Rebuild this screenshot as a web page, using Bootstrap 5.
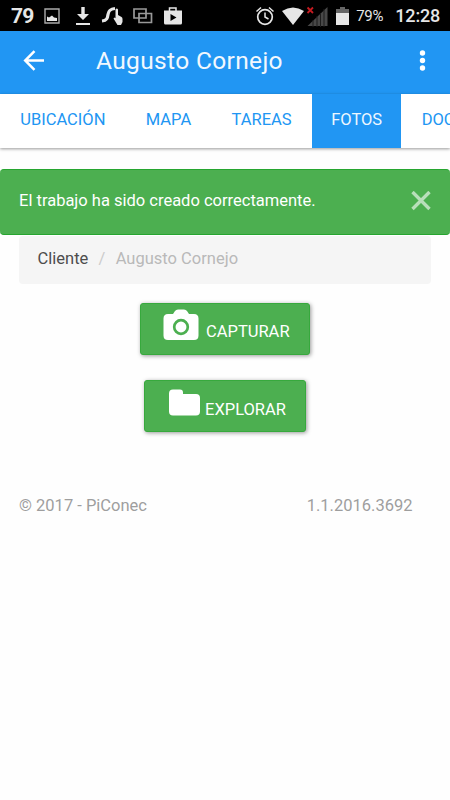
<!DOCTYPE html>
<html lang="es">
<head>
<meta charset="utf-8">
<meta name="viewport" content="width=device-width, initial-scale=1">
<title>Augusto Cornejo - Fotos</title>
<link href="https://cdn.jsdelivr.net/npm/bootstrap@5.3.0/dist/css/bootstrap.min.css" rel="stylesheet">
<style>
body{font-family:Roboto,"Liberation Sans",sans-serif;font-size:16.5px;line-height:24px;background:#fefefe;min-height:800px}
svg{display:block;flex:none}
.status{height:31px;background:#000;color:#e6e6e6;padding:1px 10px 0 11px}
.status .count{font-size:21px;font-weight:700;width:33px;letter-spacing:-.8px}
.status .pct{font-size:15px;margin-left:7px;width:39px;letter-spacing:-.4px}
.status .clock{font-size:18px;font-weight:500;letter-spacing:-.2px;white-space:nowrap}
.appbar{height:63px;background:#2196f3;color:#fff;padding:0 20px 4px 22px}
.appbar h1{font-size:24.5px;font-weight:400;letter-spacing:.35px;line-height:32px;margin:0 0 0 50px;color:#f2f8fe}
.tabs{height:54px;background:#fff;box-shadow:0 1px 3px rgba(0,0,0,.4);overflow:hidden}
.tabs .nav-link{height:54px;line-height:51px;padding:0 20.2px;color:#2196f3;border-radius:0;white-space:nowrap}
.tabs .nav-link.active{background:#2196f3;color:#eef7ff;padding:0 19.3px}
.notice{height:66px;margin:21px 0 0;padding:0 19px 2px;background:#4caf50;border:1px solid #26a52f;border-left:0;border-right:0;border-radius:4px;color:#fff}
.crumbs{margin:1px 19px 18.500px;height:48px;padding:0 18.5px 3px;background:#f5f5f5;border-radius:4px;--bs-breadcrumb-divider-color:#ccc;--bs-breadcrumb-item-padding-x:10.3px}
.crumbs .breadcrumb-item{color:#4d4d4d}
.crumbs .breadcrumb-item.active{color:#b9b9b9}
.action{--bs-btn-bg:#4caf50;--bs-btn-color:#fff;--bs-btn-border-color:#37a93d;--bs-btn-hover-bg:#43a047;--bs-btn-hover-color:#fff;--bs-btn-border-radius:3px;--bs-btn-font-size:16.5px;height:52.500px;padding:0;box-shadow:1px 1px 4px rgba(0,0,0,.4)}
.action span{line-height:20px}
.capture{width:170px}
.capture span{margin-top:18px}
.explore{width:162px;margin-top:24.500px}
.explore span{margin-top:19px}
.foot{margin:61.500px 37.500px 0 19px;color:#9e9e9e}
</style>
</head>
<body>
<div class="status d-flex align-items-center">
  <span class="count">79</span>
  <svg width="16" height="16" viewBox="0 0 16 16"><path d="M1 1h14v14H1z" fill="none" stroke="#aaa" stroke-width="1.4"/><path d="M3 13V8.500l2 1 3-2 2 2 3 .5v3z" fill="#e6e6e6"/></svg>
  <svg style="margin-left:15px" width="16" height="20" viewBox="0 0 16 20"><path d="M6.300 1h3.400v7H14l-6 6-6-6h4.300zM1 17h14v2H1z" fill="#e6e6e6"/></svg>
  <svg style="margin-left:10px" width="22" height="20" viewBox="0 0 22 20"><path d="M1 15C6 14.500 6.500 12 7 8.500 7.500 4.500 9 3 14 2.500" fill="none" stroke="#e6e6e6" stroke-width="3.200"/><path d="M14.500 3.500q1.300-2 2.500 0v5.500l3.500 2q1 .5 1 2V16l-1.500 3h-3.500l-4-6.500 1-1 1 .7z" fill="#e6e6e6"/></svg>
  <svg style="margin-left:10px" width="20" height="18" viewBox="0 0 20 18"><path d="M1 2h12v9H1zM6 6.500h12.500v9H6z" fill="none" stroke="#999" stroke-width="1.700"/></svg>
  <svg style="margin-left:9.500px" width="20" height="20" viewBox="0 0 20 20"><path d="M6.500 5V2h6.500v3" fill="none" stroke="#e6e6e6" stroke-width="1.500"/><path fill-rule="evenodd" d="M1 4.500h18V17q0 1.500-1.500 1.500h-15Q1 18.500 1 17zM7.500 8v7l6-3.500z" fill="#e6e6e6"/></svg>
  <svg class="ms-auto" width="20" height="20" viewBox="0 0 20 20"><circle cx="10" cy="11" r="7.300" fill="none" stroke="#e6e6e6" stroke-width="1.700"/><path d="M10 6.500V11l3.500 2M1.500 5.500l4.500-4M18.500 5.500 14 1.500" fill="none" stroke="#e6e6e6" stroke-width="1.500"/></svg>
  <svg style="margin-left:7px" width="54" height="21" viewBox="0 0 54 21"><path d="M0 5Q11-2 22 5L11 19z" fill="#e6e6e6"/><path d="M45.500 1v19H25.500z" fill="#484848"/><path d="M31 14v7M35 10v11M38.500 7v14M42 3v18" stroke="#1d1d1d" stroke-width="1"/><path d="m25.500 1.500 5.500 5.500m0-5.500L25.500 7" stroke="#c51a20" stroke-width="1.800"/></svg>
  <svg width="13" height="20" viewBox="0 0 13 20"><path d="M4 1h5v2h4v5H0V3h4z" fill="#666"/><path d="M0 7h13v12H0z" fill="#e6e6e6"/></svg>
  <span class="pct">79%</span>
  <span class="clock">12:28</span>
</div>
<header class="appbar d-flex align-items-center">
  <svg width="24" height="24" viewBox="0 0 24 24"><path d="M22 11.500H3.500M12.500 2.200 3.200 11.500l9.300 9.300" fill="none" stroke="#fff" stroke-width="2.500"/></svg>
  <h1>Augusto Cornejo</h1>
  <svg class="ms-auto" width="15" height="24" viewBox="0 0 15 24"><g fill="#fff"><circle cx="7.500" cy="4" r="2.700"/><circle cx="7.500" cy="11.500" r="2.700"/><circle cx="7.500" cy="19" r="2.700"/></g></svg>
</header>
<nav class="tabs nav nav-pills flex-nowrap">
  <a class="nav-link" href="#">UBICACIÓN</a>
  <a class="nav-link" href="#">MAPA</a>
  <a class="nav-link" href="#">TAREAS</a>
  <a class="nav-link active" href="#">FOTOS</a>
  <a class="nav-link" href="#">DOCUMENTOS</a>
</nav>
<div class="notice d-flex align-items-center justify-content-between" role="alert">
  <span>El trabajo ha sido creado correctamente.</span>
  <svg width="20" height="20" viewBox="0 0 20 20"><path d="m1.500 1 17 17m0-17-17 17" stroke="#b8dfba" stroke-width="3.400"/></svg>
</div>
<ol class="crumbs breadcrumb align-items-center">
  <li class="breadcrumb-item">Cliente</li>
  <li class="breadcrumb-item active">Augusto Cornejo</li>
</ol>
<div class="d-flex flex-column align-items-center">
  <button class="action capture btn d-flex" type="button">
    <svg style="margin:4px 7px 0 22px" width="36" height="34" viewBox="0 0 36 34"><path d="M5 6h5l2-3q1-1.500 3-1.500h6q2 0 3 1.500l2 3h5q4.500 0 4.500 4.500v17q0 4.500-4.500 4.500H5Q.5 32 .5 27.500v-17Q.5 6 5 6z" fill="#fff"/><circle cx="18" cy="19" r="6.800" fill="none" stroke="#4caf50" stroke-width="2.700"/></svg>
    <span>CAPTURAR</span>
  </button>
  <button class="action explore btn d-flex" type="button">
    <svg style="margin:8px 5px 0 24px" width="31" height="28" viewBox="0 0 31 28"><path d="M4 .5h7q3 0 3 3V5h13q4 0 4 4v13.500q0 4-4 4H4q-4 0-4-4v-18q0-4 4-4z" fill="#fff"/></svg>
    <span>EXPLORAR</span>
  </button>
</div>
<footer class="foot d-flex justify-content-between"><span>© 2017 - PiConec</span><span>1.1.2016.3692</span></footer>
<script src="https://cdn.jsdelivr.net/npm/bootstrap@5.3.0/dist/js/bootstrap.bundle.min.js"></script>
</body>
</html>
